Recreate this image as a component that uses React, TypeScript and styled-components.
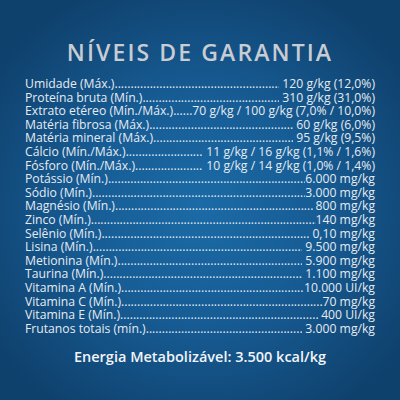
import styled, { createGlobalStyle } from 'styled-components';

const GlobalStyle = createGlobalStyle`
  html, body {
    margin: 0;
    padding: 0;
  }
`;

type Nutrient = {
  label: string;
  value: string;
  tight?: boolean;
};

const nutrients: Nutrient[] = [
  { label: 'Umidade (Máx.)', value: '120 g/kg (12,0%)' },
  { label: 'Proteína bruta (Mín.)', value: '310 g/kg (31,0%)' },
  { label: 'Extrato etéreo (Mín./Máx.)', value: '70 g/kg / 100 g/kg (7,0% / 10,0%)', tight: true },
  { label: 'Matéria fibrosa (Máx.)', value: '60 g/kg (6,0%)' },
  { label: 'Matéria mineral (Máx.)', value: '95 g/kg (9,5%)' },
  { label: 'Cálcio (Mín./Máx.)', value: '11 g/kg / 16 g/kg (1,1% / 1,6%)' },
  { label: 'Fósforo (Mín./Máx.)', value: '10 g/kg / 14 g/kg (1,0% / 1,4%)' },
  { label: 'Potássio (Mín.)', value: '6.000 mg/kg', tight: true },
  { label: 'Sódio (Mín.)', value: '3.000 mg/kg', tight: true },
  { label: 'Magnésio (Mín.)', value: '800 mg/kg' },
  { label: 'Zinco (Mín.)', value: '140 mg/kg', tight: true },
  { label: 'Selênio (Mín.)', value: '0,10 mg/kg' },
  { label: 'Lisina (Mín.)', value: '9.500 mg/kg' },
  { label: 'Metionina (Mín.)', value: '5.900 mg/kg' },
  { label: 'Taurina (Mín.)', value: '1.100 mg/kg' },
  { label: 'Vitamina A (Mín.)', value: '10.000 UI/kg', tight: true },
  { label: 'Vitamina C (Mín.)', value: '70 mg/kg', tight: true },
  { label: 'Vitamina E (Mín.)', value: '400 UI/kg' },
  { label: 'Frutanos totais (mín.)', value: '3.000 mg/kg' },
];

const Panel = styled.div`
  width: 400px;
  height: 400px;
  box-sizing: border-box;
  padding-top: 38px;
  background: radial-gradient(ellipse 62% 60% at 50% 52%, #1b6ba6 0%, #175d96 45%, #0f416d 100%);
  font-family: 'Open Sans', 'Liberation Sans', sans-serif;
  display: flex;
  flex-direction: column;
  align-items: center;
  overflow: hidden;
`;

const Title = styled.h1`
  margin: 0;
  font-size: 23px;
  line-height: 28px;
  font-weight: 600;
  letter-spacing: 2.1px;
  color: #c8ccd3;
`;

const Table = styled.div`
  margin-top: 11px;
  width: 350px;
  display: flex;
  flex-direction: column;
`;

const Row = styled.div`
  display: flex;
  align-items: baseline;
  height: 13.6px;
  font-size: 12.2px;
  line-height: 13.6px;
  color: #e6ebf1;
  white-space: nowrap;
`;

const Label = styled.span`
  flex: none;
`;

const Leader = styled.span`
  flex: 1;
  overflow: hidden;
  min-width: 0;
  &::after {
    content: '${'.'.repeat(200)}';
  }
`;

const Value = styled.span<{ $tight?: boolean }>`
  flex: none;
  padding-left: ${({ $tight }) => ($tight ? '0' : '3px')};
`;

const Energy = styled.p`
  margin: 13px 0 0;
  font-size: 14.5px;
  line-height: 18px;
  font-weight: 600;
  color: #f2f5f8;
`;

export default function App() {
  return (
    <>
      <GlobalStyle />
      <Panel>
        <Title>NÍVEIS DE GARANTIA</Title>
        <Table>
          {nutrients.map((n) => (
            <Row key={n.label}>
              <Label>{n.label}</Label>
              <Leader />
              <Value $tight={n.tight}>{n.value}</Value>
            </Row>
          ))}
        </Table>
        <Energy>Energia Metabolizável: 3.500 kcal/kg</Energy>
      </Panel>
    </>
  );
}
